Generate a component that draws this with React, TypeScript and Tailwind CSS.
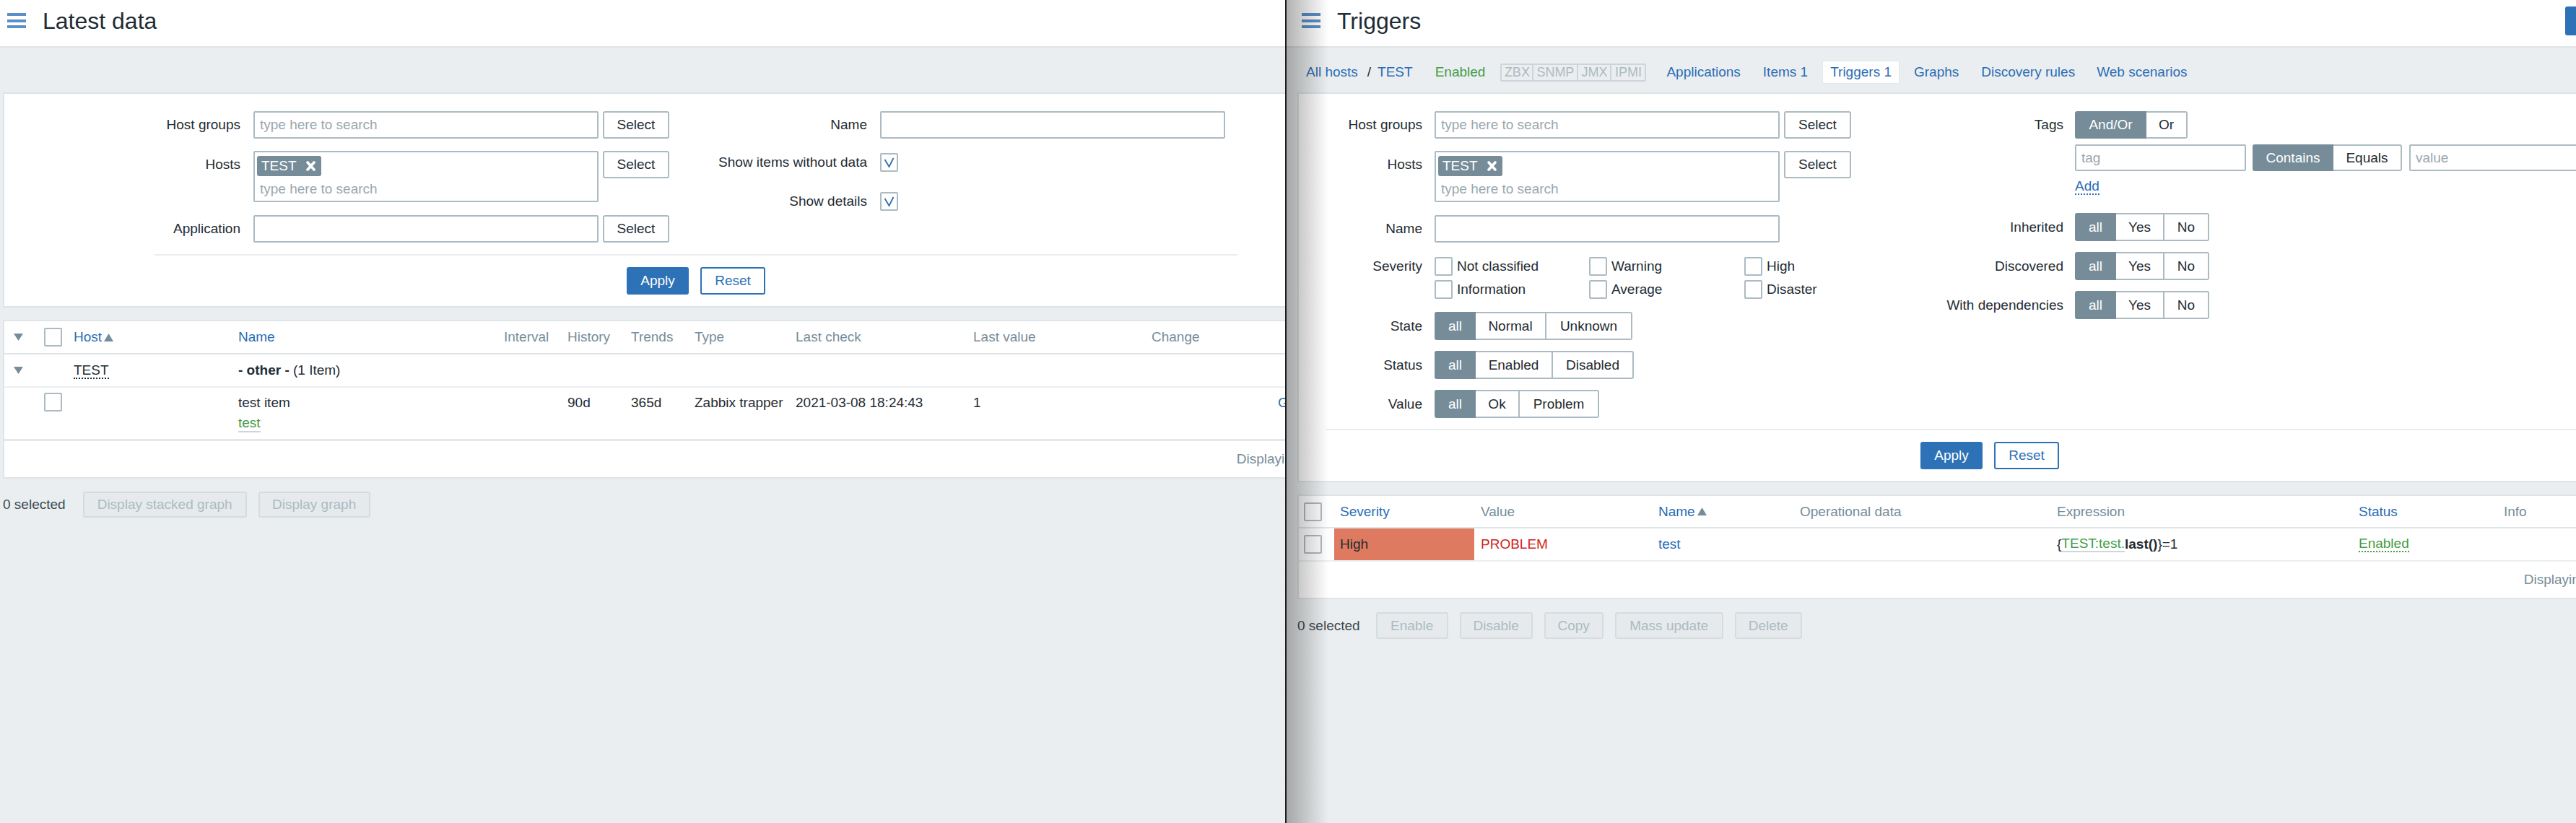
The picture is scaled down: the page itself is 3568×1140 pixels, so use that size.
// Two Zabbix windows side by side: Latest data (left) and Triggers (right)
import type { ReactNode } from 'react'

interface Seg {
  label: string
  w: string
}

function Hamburger() {
  return (
    <svg width="26" height="22" viewBox="0 0 26 22" className="shrink-0">
      <rect x="0" y="0" width="26" height="4" fill="#5b8fc8" />
      <rect x="0" y="9" width="26" height="4" fill="#5b8fc8" />
      <rect x="0" y="17" width="26" height="4" fill="#5b8fc8" />
    </svg>
  )
}

function Checkbox({ checked = false }: { checked?: boolean }) {
  return (
    <span className="flex h-[26px] w-[25px] shrink-0 items-center justify-center rounded-[2px] border-2 border-[#acbbc2] bg-white">
      {checked && (
        <svg width="17" height="16" viewBox="0 0 17 16">
          <polyline points="2.5,4 8.5,14 14.5,2" fill="none" stroke="#2a6db5" strokeWidth="1.8" />
        </svg>
      )}
    </span>
  )
}

function SortUp() {
  return (
    <svg width="13" height="11" viewBox="0 0 13 11" className="ml-[3px] shrink-0">
      <polygon points="6.5,0 13,11 0,11" fill="#768d99" />
    </svg>
  )
}

function Collapse() {
  return (
    <svg width="13" height="10" viewBox="0 0 13 10">
      <polygon points="0,0 13,0 6.5,10" fill="#768d99" />
    </svg>
  )
}

function Chip() {
  return (
    <div className="flex h-[28px] w-fit items-center gap-[13px] rounded-[3px] bg-[#768d99] pl-[6px] pr-[8px] text-white">
      <span>TEST</span>
      <svg width="13" height="14" viewBox="0 0 13 14">
        <path d="M2 2 L11 12 M11 2 L2 12" stroke="#fff" strokeWidth="3.6" strokeLinecap="round" />
      </svg>
    </div>
  )
}

function TextBox({ placeholder, className }: { placeholder?: string; className: string }) {
  return (
    <div
      className={`flex h-[38px] shrink-0 items-center rounded-[2px] border-2 border-[#acbbc2] bg-white px-[7px] text-[#9aa7ae] ${className}`}
    >
      {placeholder}
    </div>
  )
}

function SelectBtn({ className }: { className: string }) {
  return (
    <div
      className={`flex h-[38px] shrink-0 items-center justify-center rounded-[3px] border-2 border-[#acbbc2] bg-white ${className}`}
    >
      Select
    </div>
  )
}

function MultiSelect() {
  return (
    <div className="h-[71px] w-[478px] shrink-0 rounded-[2px] border-2 border-[#acbbc2] bg-white px-[3px] pt-[5px]">
      <Chip />
      <div className="mt-[7px] pl-[4px] text-[#9aa7ae]">type here to search</div>
    </div>
  )
}

function Segmented({ items, h = 'h-[39px]' }: { items: Seg[]; h?: string }) {
  return (
    <div className={`flex ${h}`}>
      {items.map((s, i) => (
        <div
          key={s.label}
          className={`flex items-center justify-center ${s.w} ${
            i === 0
              ? 'rounded-l-[3px] border-2 border-[#768d99] bg-[#768d99] text-white'
              : 'border-y-2 border-r-2 border-[#acbbc2] bg-white'
          } ${i === items.length - 1 ? 'rounded-r-[3px]' : ''}`}
        >
          {s.label}
        </div>
      ))}
    </div>
  )
}

function Label({ children, className }: { children?: ReactNode; className: string }) {
  return <div className={`flex h-[38px] shrink-0 items-center justify-end ${className}`}>{children}</div>
}

function ApplyReset() {
  return (
    <div className="mt-[16px] flex justify-center gap-[16px]">
      <div className="flex h-[38px] w-[86px] items-center justify-center rounded-[3px] bg-[#2d72b6] text-white">
        Apply
      </div>
      <div className="flex h-[38px] w-[90px] items-center justify-center rounded-[3px] border-2 border-[#2d72b6] bg-white text-[#2d72b6]">
        Reset
      </div>
    </div>
  )
}

function DisabledBtn({ children, className }: { children: ReactNode; className: string }) {
  return (
    <div
      className={`flex h-full items-center justify-center rounded-[3px] border-2 border-[#d5dcdf] bg-[#e6eaec] text-[#acbbc2] ${className}`}
    >
      {children}
    </div>
  )
}

function LatestData() {
  return (
    <div className="h-full w-[1780px] shrink-0 overflow-hidden bg-[#ebeef0]">
      <div className="w-[1940px]">
        {/* Header */}
        <div className="flex h-[66px] items-center border-b-2 border-[#dfe4e7] bg-white pb-[7px] pl-[10px]">
          <Hamburger />
          <h1 className="ml-[23px] text-[32px] leading-none">Latest data</h1>
        </div>
        <div className="h-[62px]" />

        {/* Filter */}
        <div className="ml-[4px] w-[1920px] border-2 border-[#dfe4e7] bg-white pb-[16px] pt-[24px]">
          <div className="mx-auto w-[1500px]">
            <div className="flex">
              <div className="flex w-[713px] flex-col">
                <div className="flex items-start gap-[18px]">
                  <Label className="w-[119px]">Host groups</Label>
                  <div className="flex gap-[6px]">
                    <TextBox placeholder="type here to search" className="w-[478px]" />
                    <SelectBtn className="w-[92px]" />
                  </div>
                </div>
                <div className="mt-[17px] flex items-start gap-[18px]">
                  <Label className="w-[119px]">Hosts</Label>
                  <div className="flex items-start gap-[6px]">
                    <MultiSelect />
                    <SelectBtn className="w-[92px]" />
                  </div>
                </div>
                <div className="mt-[18px] flex items-start gap-[18px]">
                  <Label className="w-[119px]">Application</Label>
                  <div className="flex gap-[6px]">
                    <TextBox className="w-[478px]" />
                    <SelectBtn className="w-[92px]" />
                  </div>
                </div>
              </div>
              <div className="flex flex-col">
                <div className="flex items-start gap-[18px]">
                  <Label className="w-[274px]">Name</Label>
                  <TextBox className="w-[478px]" />
                </div>
                <div className="mt-[14px] flex items-center gap-[18px]">
                  <Label className="w-[274px]">Show items without data</Label>
                  <Checkbox checked />
                </div>
                <div className="mt-[16px] flex items-center gap-[18px]">
                  <Label className="w-[274px]">Show details</Label>
                  <Checkbox checked />
                </div>
              </div>
            </div>
            <div className="mt-[16px] h-[2px] bg-[#ebeef0]" />
            <ApplyReset />
          </div>
        </div>

        {/* Table */}
        <div className="ml-[4px] mt-[17px] w-[1920px] border-2 border-[#dfe4e7] bg-white">
          <div className="flex h-[46px] items-center border-b-2 border-[#dfe4e7] text-[#768d99]">
            <div className="flex w-[55px] pl-[13px]">
              <Collapse />
            </div>
            <div className="w-[41px]">
              <Checkbox />
            </div>
            <div className="flex w-[228px] items-center text-[#2a6db5]">
              Host
              <SortUp />
            </div>
            <div className="w-[368px] text-[#2a6db5]">Name</div>
            <div className="w-[88px]">Interval</div>
            <div className="w-[88px]">History</div>
            <div className="w-[88px]">Trends</div>
            <div className="w-[140px]">Type</div>
            <div className="w-[246px]">Last check</div>
            <div className="w-[247px]">Last value</div>
            <div className="w-[175px]">Change</div>
            <div className="flex-1" />
          </div>
          <div className="flex h-[46px] items-center border-b-2 border-[#ebeef0]">
            <div className="flex w-[55px] pl-[13px]">
              <Collapse />
            </div>
            <div className="w-[41px]" />
            <div className="w-[228px]">
              <span className="border-b-2 border-dotted border-[#1f2c33]">TEST</span>
            </div>
            <div className="flex-1">
              <b>- other -</b> (1 Item)
            </div>
          </div>
          <div className="flex h-[74px] items-start border-b-[3px] border-[#e3e7ea] pt-[7px]">
            <div className="w-[55px]" />
            <div className="w-[41px]">
              <Checkbox />
            </div>
            <div className="w-[228px]" />
            <div className="mt-[3px] flex w-[368px] flex-col items-start">
              <span>test item</span>
              <span className="mt-[6px] border-b-2 border-[#cfd6da] text-[#439c47]">test</span>
            </div>
            <div className="mt-[3px] w-[88px]" />
            <div className="mt-[3px] w-[88px]">90d</div>
            <div className="mt-[3px] w-[88px]">365d</div>
            <div className="mt-[3px] w-[140px]">Zabbix trapper</div>
            <div className="mt-[3px] w-[246px]">2021-03-08 18:24:43</div>
            <div className="mt-[3px] w-[247px]">1</div>
            <div className="mt-[3px] w-[175px]" />
            <div className="mt-[3px] flex-1 text-[#2a6db5]">Graph</div>
          </div>
          <div className="flex h-[50px] items-center justify-end pr-[16px] text-[#768d99]">
            Displaying 1 of 1 found
          </div>
        </div>

        {/* Actions */}
        <div className="mt-[18px] flex h-[36px] items-center pl-[4px]">
          <span className="text-[#3b4a52]">0 selected</span>
          <div className="ml-[24px] flex h-full gap-[16px]">
            <DisabledBtn className="w-[227px]">Display stacked graph</DisabledBtn>
            <DisabledBtn className="w-[155px]">Display graph</DisabledBtn>
          </div>
        </div>
      </div>
    </div>
  )
}

const stateSegs: Seg[] = [
  { label: 'all', w: 'w-[57px]' },
  { label: 'Normal', w: 'w-[98px]' },
  { label: 'Unknown', w: 'w-[119px]' },
]
const statusSegs: Seg[] = [
  { label: 'all', w: 'w-[57px]' },
  { label: 'Enabled', w: 'w-[107px]' },
  { label: 'Disabled', w: 'w-[112px]' },
]
const valueSegs: Seg[] = [
  { label: 'all', w: 'w-[57px]' },
  { label: 'Ok', w: 'w-[61px]' },
  { label: 'Problem', w: 'w-[110px]' },
]
const yesNoSegs: Seg[] = [
  { label: 'all', w: 'w-[57px]' },
  { label: 'Yes', w: 'w-[67px]' },
  { label: 'No', w: 'w-[62px]' },
]
const tagOpSegs: Seg[] = [
  { label: 'And/Or', w: 'w-[99px]' },
  { label: 'Or', w: 'w-[57px]' },
]
const containsSegs: Seg[] = [
  { label: 'Contains', w: 'w-[112px]' },
  { label: 'Equals', w: 'w-[95px]' },
]

const severities = [
  ['Not classified', 'Warning', 'High'],
  ['Information', 'Average', 'Disaster'],
]

function Triggers() {
  return (
    <div className="relative h-full flex-1 overflow-hidden bg-[#ebeef0]">
      {/* window shadow of the left window */}
      <div className="pointer-events-none absolute left-0 top-0 z-10 h-full w-[58px] bg-linear-to-r from-black/30 to-transparent" />
      <div className="w-[1950px]">
        {/* Header */}
        <div className="flex h-[66px] items-center border-b-2 border-[#dfe4e7] bg-white pb-[7px] pl-[21px]">
          <Hamburger />
          <h1 className="ml-[23px] text-[32px] leading-none">Triggers</h1>
          <div className="ml-auto mr-[29px] flex h-[40px] w-[150px] items-center justify-center rounded-[3px] bg-[#2d72b6] text-white">
            Create trigger
          </div>
        </div>

        {/* Host navigation */}
        <div className="flex h-[62px] items-center pl-[27px] pt-[6px] text-[#2a6db5]">
          <span>All hosts</span>
          <span className="ml-[13px] text-[#1f2c33]">/</span>
          <span className="ml-[9px]">TEST</span>
          <span className="ml-[31px] text-[#439c47]">Enabled</span>
          <div className="ml-[21px] flex h-[25px] rounded-[2px] border-2 border-[#cdd5d9] text-[18px] text-[#acbbc2]">
            <span className="flex w-[44px] items-center justify-center border-r-2 border-[#cdd5d9]">ZBX</span>
            <span className="flex w-[62px] items-center justify-center border-r-2 border-[#cdd5d9]">SNMP</span>
            <span className="flex w-[46px] items-center justify-center border-r-2 border-[#cdd5d9]">JMX</span>
            <span className="flex w-[46px] items-center justify-center">IPMI</span>
          </div>
          <span className="ml-[28px]">Applications</span>
          <span className="ml-[31px]">Items 1</span>
          <span className="ml-[20px] flex h-[32px] items-center rounded-[2px] border border-[#e3e7ea] bg-white px-[10px]">
            Triggers 1
          </span>
          <span className="ml-[20px]">Graphs</span>
          <span className="ml-[31px]">Discovery rules</span>
          <span className="ml-[30px]">Web scenarios</span>
        </div>

        {/* Filter */}
        <div className="ml-[15px] w-[1918px] border-2 border-[#dfe4e7] bg-white pb-[16px] pt-[24px]">
          <div className="mx-auto w-[1840px]">
            <div className="flex">
              <div className="flex w-[728px] flex-col">
                <div className="flex items-start gap-[17px]">
                  <Label className="w-[134px]">Host groups</Label>
                  <div className="flex gap-[6px]">
                    <TextBox placeholder="type here to search" className="w-[478px]" />
                    <SelectBtn className="w-[93px]" />
                  </div>
                </div>
                <div className="mt-[17px] flex items-start gap-[17px]">
                  <Label className="w-[134px]">Hosts</Label>
                  <div className="flex items-start gap-[6px]">
                    <MultiSelect />
                    <SelectBtn className="w-[93px]" />
                  </div>
                </div>
                <div className="mt-[18px] flex items-start gap-[17px]">
                  <Label className="w-[134px]">Name</Label>
                  <TextBox className="w-[478px]" />
                </div>
                <div className="mt-[20px] flex items-start gap-[17px]">
                  <div className="flex h-[26px] w-[134px] items-center justify-end">Severity</div>
                  <div className="flex flex-col gap-[6px]">
                    {severities.map((row) => (
                      <div key={row[0]} className="grid h-[26px] grid-cols-[214px_215px_auto]">
                        {row.map((s) => (
                          <div key={s} className="flex items-center gap-[6px]">
                            <Checkbox />
                            <span>{s}</span>
                          </div>
                        ))}
                      </div>
                    ))}
                  </div>
                </div>
                <div className="mt-[18px] flex items-center gap-[17px]">
                  <Label className="w-[134px]">State</Label>
                  <Segmented items={stateSegs} />
                </div>
                <div className="mt-[15px] flex items-center gap-[17px]">
                  <Label className="w-[134px]">Status</Label>
                  <Segmented items={statusSegs} />
                </div>
                <div className="mt-[15px] flex items-center gap-[17px]">
                  <Label className="w-[134px]">Value</Label>
                  <Segmented items={valueSegs} />
                </div>
              </div>

              <div className="flex flex-col">
                <div className="flex items-center gap-[16px]">
                  <Label className="w-[294px]">Tags</Label>
                  <Segmented items={tagOpSegs} h="h-[38px]" />
                </div>
                <div className="mt-[8px] flex items-center gap-[16px]">
                  <div className="w-[294px]" />
                  <div className="flex items-center">
                    <TextBox placeholder="tag" className="h-[37px]! w-[237px]" />
                    <div className="ml-[9px]">
                      <Segmented items={containsSegs} h="h-[37px]" />
                    </div>
                    <TextBox placeholder="value" className="ml-[10px] h-[37px]! w-[237px]" />
                  </div>
                </div>
                <div className="mt-[10px] flex h-[24px] items-center gap-[16px]">
                  <div className="w-[294px]" />
                  <span className="border-b-2 border-dotted border-[#2a6db5] leading-[20px] text-[#2a6db5]">Add</span>
                </div>
                <div className="mt-[24px] flex items-center gap-[16px]">
                  <Label className="w-[294px]">Inherited</Label>
                  <Segmented items={yesNoSegs} />
                </div>
                <div className="mt-[15px] flex items-center gap-[16px]">
                  <Label className="w-[294px]">Discovered</Label>
                  <Segmented items={yesNoSegs} />
                </div>
                <div className="mt-[15px] flex items-center gap-[16px]">
                  <Label className="w-[294px]">With dependencies</Label>
                  <Segmented items={yesNoSegs} />
                </div>
              </div>
            </div>
            <div className="mt-[15px] h-[2px] bg-[#ebeef0]" />
            <ApplyReset />
          </div>
        </div>

        {/* Table */}
        <div className="ml-[15px] mt-[17px] w-[1918px] border-2 border-[#dfe4e7] bg-white">
          <div className="flex h-[45px] items-center border-b-2 border-[#dfe4e7] text-[#768d99]">
            <div className="w-[49px] pl-[7px]">
              <Checkbox />
            </div>
            <div className="w-[194px] pl-[8px] text-[#2a6db5]">Severity</div>
            <div className="w-[246px] pl-[9px]">Value</div>
            <div className="flex w-[196px] items-center pl-[9px] text-[#2a6db5]">
              Name
              <SortUp />
            </div>
            <div className="w-[356px] pl-[9px]">Operational data</div>
            <div className="w-[418px] pl-[9px]">Expression</div>
            <div className="w-[201px] pl-[9px] text-[#2a6db5]">Status</div>
            <div className="flex-1 pl-[9px]">Info</div>
          </div>
          <div className="flex h-[46px] items-stretch border-b-2 border-[#ebeef0]">
            <div className="flex w-[49px] items-center pl-[7px]">
              <Checkbox />
            </div>
            <div className="flex w-[194px] items-center bg-[#de7a5f] pl-[8px]">High</div>
            <div className="flex w-[246px] items-center pl-[9px] text-[#cf1f1f]">PROBLEM</div>
            <div className="flex w-[196px] items-center pl-[9px] text-[#2a6db5]">test</div>
            <div className="w-[356px]" />
            <div className="flex w-[418px] items-center pl-[9px]">
              {'{'}
              <span className="border-b-2 border-[#cfd6da] leading-[20px] text-[#439c47]">TEST:test.</span>
              <b>last()</b>
              {'}=1'}
            </div>
            <div className="flex w-[201px] items-center pl-[9px]">
              <span className="border-b-2 border-dotted border-[#439c47] leading-[20px] text-[#439c47]">Enabled</span>
            </div>
            <div className="flex-1" />
          </div>
          <div className="flex h-[50px] items-center justify-end pr-[24px] text-[#768d99]">
            Displaying 1 of 1 found
          </div>
        </div>

        {/* Actions */}
        <div className="mt-[18px] flex h-[37px] items-center pl-[15px]">
          <span className="text-[#3b4a52]">0 selected</span>
          <div className="ml-[22px] flex h-full gap-[16px]">
            <DisabledBtn className="w-[100px]">Enable</DisabledBtn>
            <DisabledBtn className="w-[101px]">Disable</DisabledBtn>
            <DisabledBtn className="w-[82px]">Copy</DisabledBtn>
            <DisabledBtn className="w-[150px]">Mass update</DisabledBtn>
            <DisabledBtn className="w-[93px]">Delete</DisabledBtn>
          </div>
        </div>
      </div>
    </div>
  )
}

export default function App() {
  return (
    <div className="flex h-[1140px] w-[3568px] overflow-hidden bg-[#ebeef0] font-['Liberation_Sans',Arial,sans-serif] text-[19px] leading-[22px] text-[#1f2c33]">
      <LatestData />
      <div className="w-[2px] shrink-0 bg-[#1c1c1c]" />
      <Triggers />
    </div>
  )
}
